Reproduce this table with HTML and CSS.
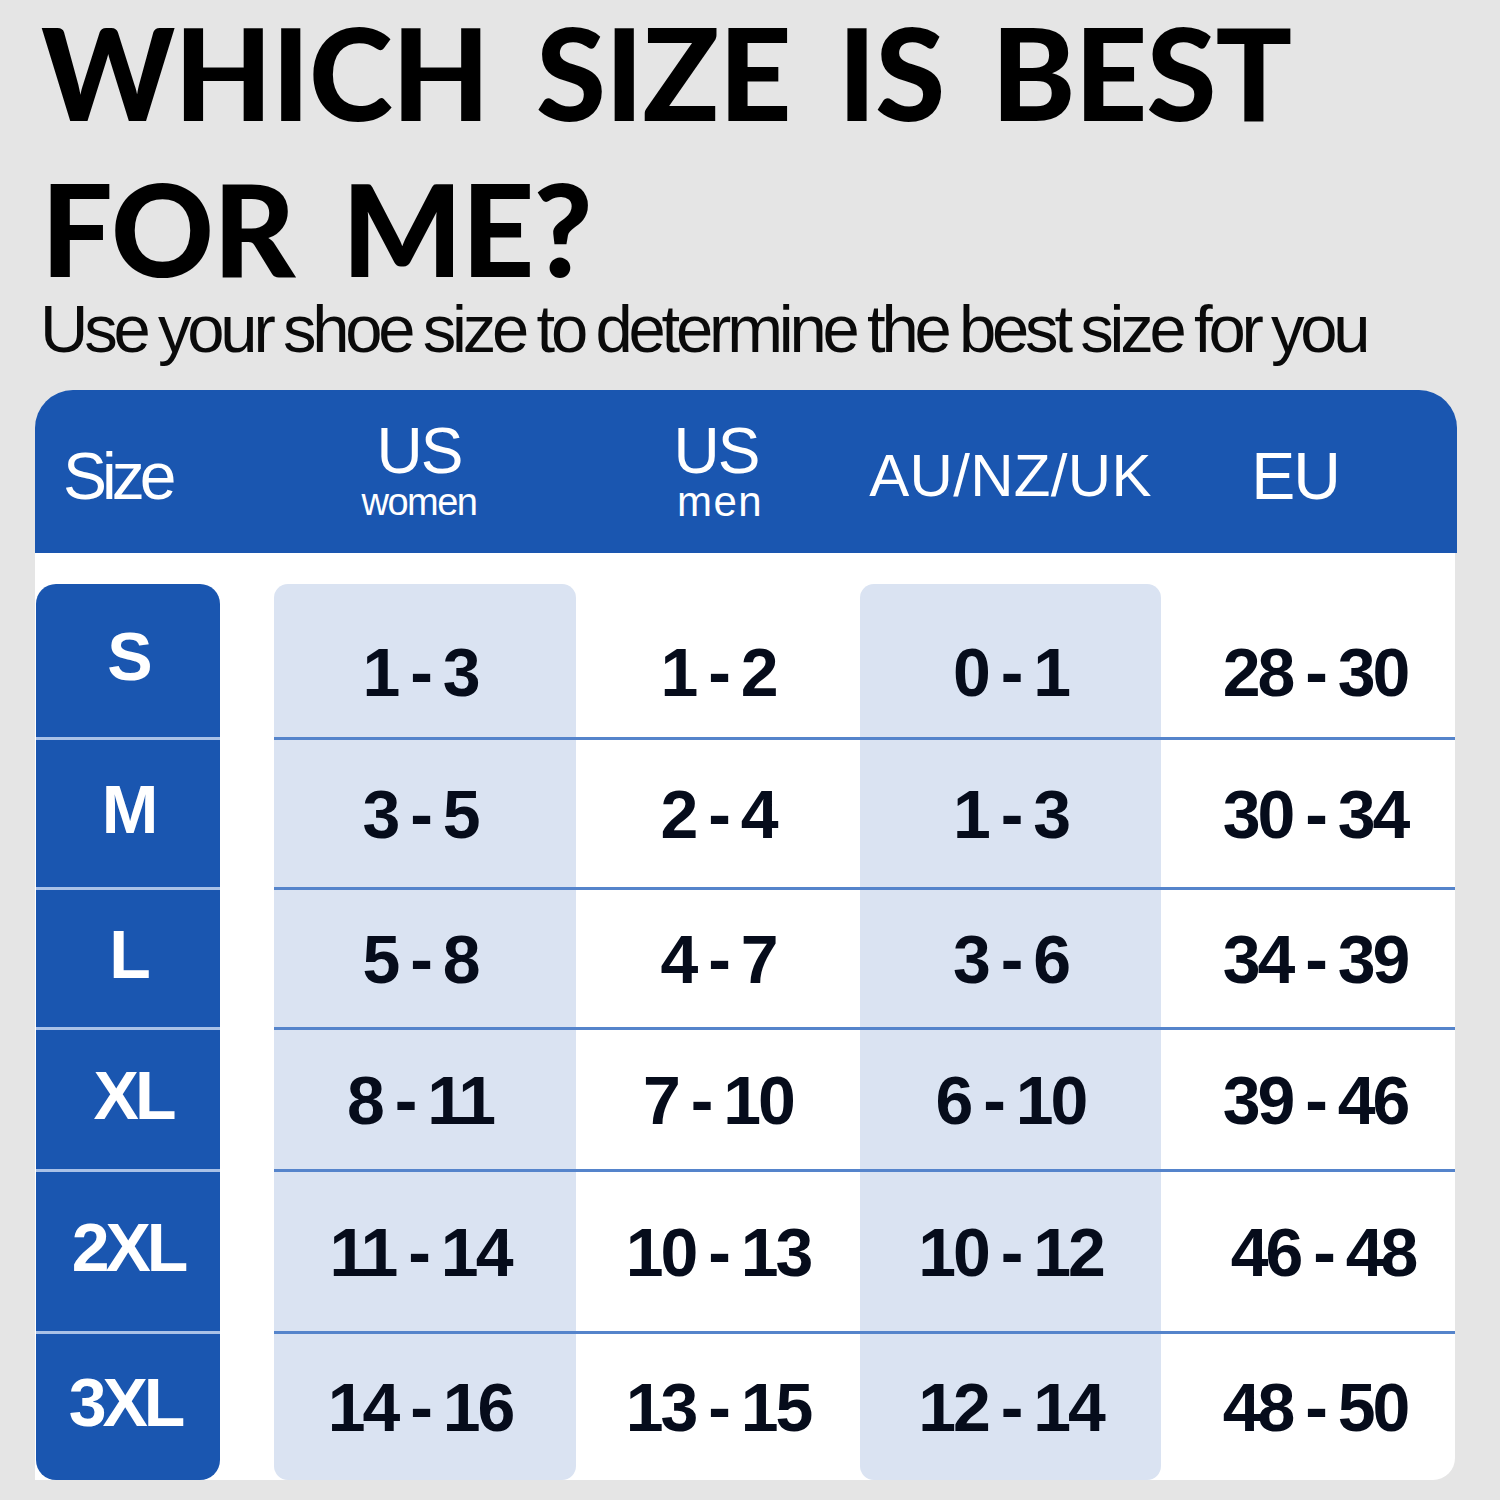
FILE: index.html
```html
<!DOCTYPE html>
<html lang="en">
<head>
<meta charset="utf-8">
<title>Which size is best for me?</title>
<link rel="stylesheet" href="styles.css">
</head>
<body>
<div class="page">
  <h1 class="title"><span class="t-line">WHICH SIZE IS BEST</span><span class="t-line t-second">FOR ME?</span></h1>
  <p class="subtitle">Use your shoe size to determine the best size for you</p>
  <div class="chart">
    <div class="chart-head">
      <div class="h-size">Size</div>
      <div class="h-col h-women"><span class="h-main">US</span><span class="h-sub">women</span></div>
      <div class="h-col h-men"><span class="h-main">US</span><span class="h-sub h-sub-men">men</span></div>
      <div class="h-col h-au">AU/NZ/UK</div>
      <div class="h-col h-eu">EU</div>
    </div>
    <div class="chart-body">
      <div class="lab top">S</div>
      <div class="cell shade c1 top r1">1 - 3</div>
      <div class="cell r1">1 - 2</div>
      <div class="cell shade top r1">0 - 1</div>
      <div class="cell eu r1">28 - 30</div>

      <div class="lab sep">M</div>
      <div class="cell shade c1 sep">3 - 5</div>
      <div class="cell sep">2 - 4</div>
      <div class="cell shade sep">1 - 3</div>
      <div class="cell eu sep">30 - 34</div>

      <div class="lab sep">L</div>
      <div class="cell shade c1 sep">5 - 8</div>
      <div class="cell sep">4 - 7</div>
      <div class="cell shade sep">3 - 6</div>
      <div class="cell eu sep">34 - 39</div>

      <div class="lab sep lab-xl">XL</div>
      <div class="cell shade c1 sep">8 - 11</div>
      <div class="cell sep">7 - 10</div>
      <div class="cell shade sep">6 - 10</div>
      <div class="cell eu sep">39 - 46</div>

      <div class="lab sep">2XL</div>
      <div class="cell shade c1 sep">11 - 14</div>
      <div class="cell sep">10 - 13</div>
      <div class="cell shade sep">10 - 12</div>
      <div class="cell eu sep eu-shift">46 - 48</div>

      <div class="lab sep bottom lab-3xl">3XL</div>
      <div class="cell shade c1 sep bottom">14 - 16</div>
      <div class="cell sep">13 - 15</div>
      <div class="cell shade sep bottom">12 - 14</div>
      <div class="cell eu sep">48 - 50</div>
    </div>
  </div>
</div>
</body>
</html>
```

FILE: styles.css
```css
html, body {
  margin: 0;
  padding: 0;
  background: #e5e5e5;
}

.page {
  width: 1500px;
  height: 1500px;
  overflow: hidden;
  background: #e5e5e5;
  box-sizing: border-box;
  padding-left: 35px;
}

.title {
  margin: 0 0 0 6px;
  font-family: "Lato", "Open Sans", sans-serif;
  font-weight: 900;
  font-size: 127px;
  line-height: 144px;
  letter-spacing: -1px;
  word-spacing: 18px;
  color: #000;
}

.t-line {
  display: block;
}

.t-second {
  margin-top: 12px;
}

.subtitle {
  margin: 0 0 0 5px;
  font-family: "Liberation Sans", sans-serif;
  font-weight: 400;
  font-size: 67px;
  line-height: 58px;
  letter-spacing: -4.2px;
  word-spacing: -3px;
  color: #0a0a0a;
  white-space: nowrap;
}

.chart {
  margin-top: 32px;
  width: 1422px;
}

.chart-head {
  height: 163px;
  background: #1a56b0;
  border-radius: 38px 38px 0 0;
  display: grid;
  grid-template-columns: 239px 302px 284px 301px 1fr;
  align-items: center;
  color: #fff;
  font-family: "Liberation Sans", sans-serif;
}

.h-size {
  padding-left: 28px;
  padding-top: 8px;
  font-size: 66px;
  letter-spacing: -5px;
}

.h-col {
  display: flex;
  flex-direction: column;
  align-items: center;
}

.h-women {
  padding-right: 12px;
}

.h-men {
  padding-right: 4px;
}

.h-main {
  font-size: 64px;
  line-height: 60px;
  letter-spacing: -2px;
  margin-top: -2px;
}

.h-sub {
  margin-top: 2px;
  font-size: 38px;
  line-height: 38px;
  letter-spacing: -1.5px;
}

.h-sub-men {
  font-size: 42px;
  letter-spacing: 1.5px;
  padding-left: 8px;
}

.h-au {
  font-size: 60px;
  padding-top: 8px;
  letter-spacing: 0.3px;
}

.h-eu {
  font-size: 66px;
  padding-top: 8px;
  padding-right: 28px;
  letter-spacing: -2px;
}

.chart-body {
  width: 1420px;
  background: #fff;
  border-radius: 0 0 22px 0;
  padding-top: 31px;
  display: grid;
  grid-template-columns: 239px 302px 284px 301px 1fr;
  grid-template-rows: 153px 150px 140px 142px 162px 149px;
}

.lab {
  margin-left: 1px;
  margin-right: 54px;
  background: #1a56b0;
  color: #fff;
  font-family: "Liberation Sans", sans-serif;
  font-weight: 700;
  font-size: 68px;
  letter-spacing: -4px;
  display: flex;
  align-items: center;
  justify-content: center;
  padding-bottom: 10px;
}

.lab.sep {
  border-top: 3px solid #a9c1e7;
}

.lab.top {
  border-radius: 20px 20px 0 0;
}

.lab.bottom {
  border-radius: 0 0 20px 20px;
}

.lab-xl {
  padding-left: 10px;
}

.lab-3xl {
  padding-right: 6px;
}

.cell {
  display: flex;
  align-items: center;
  justify-content: center;
  font-family: "Liberation Sans", sans-serif;
  font-weight: 700;
  font-size: 68px;
  letter-spacing: -3px;
  word-spacing: -3px;
  color: #060c1b;
}

.cell.r1 {
  padding-top: 22px;
}

.cell.sep {
  border-top: 3px solid #5584cb;
}

.shade {
  background: #dae3f2;
}

.shade.c1 {
  padding-right: 10px;
}

.shade.top {
  border-radius: 14px 14px 0 0;
}

.shade.bottom {
  border-radius: 0 0 14px 14px;
}

.cell.eu {
  padding-left: 14px;
}

.cell.eu-shift {
  padding-left: 30px;
}
```
